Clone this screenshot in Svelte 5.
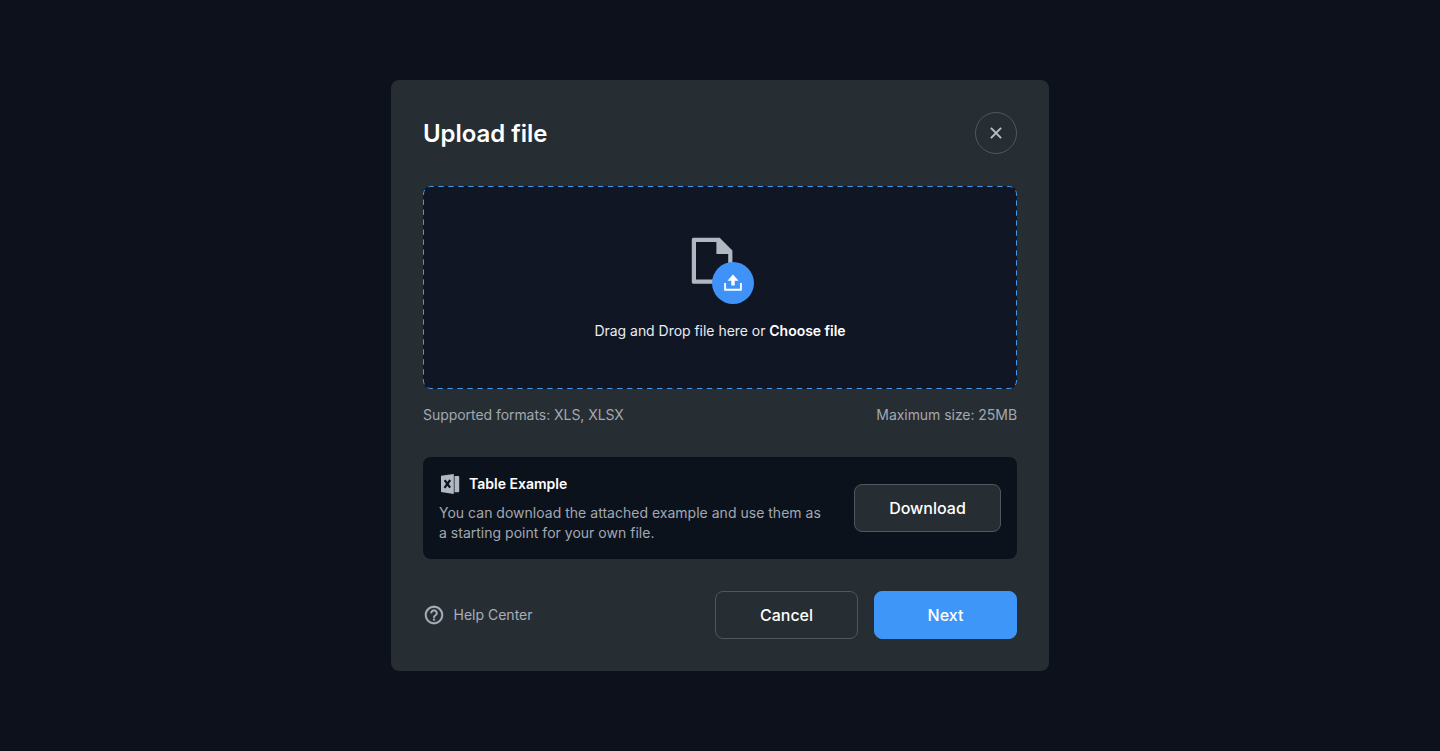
<script>
  const description =
    'You can download the attached example and use them as a starting point for your own file.';
</script>

<main>
  <section class="modal">
    <header>
      <h1>Upload file</h1>
      <button class="close" aria-label="Close">
        <svg width="14" height="14" viewBox="0 0 14 14"><path d="M1.9 1.9 12.1 12.1M12.1 1.9 1.9 12.1" stroke="currentColor" stroke-width="2" fill="none" /></svg>
      </button>
    </header>

    <div class="drop">
      <svg class="outline" width="594" height="203" viewBox="0 0 594 203" aria-hidden="true">
        <rect x=".5" y=".5" width="593" height="202" rx="7.5" fill="none" stroke="#4398ec" stroke-dasharray="5.4 4.58" stroke-dashoffset="2.7" />
      </svg>
      <svg class="file" width="64" height="68" viewBox="0 0 64 68" aria-hidden="true">
        <path fill="#b1b8c2" fill-rule="evenodd" d="M3.4 .8H29.7L42.4 13.5V45.2A1.6 1.6 0 0 1 40.8 46.8H3.4A1.6 1.6 0 0 1 1.8 45.2V2.4A1.6 1.6 0 0 1 3.4 .8ZM6 5V42.5H38.2V17H26.4V5Z" />
        <circle cx="43" cy="46" r="21" fill="#3f93f8" />
        <path d="M43 37.6 48.5 43.8H44.7V48.6H41.3V43.8H37.5Z" fill="#fff" />
        <path d="M35.1 46V52.7H50.9V46" fill="none" stroke="#fff" stroke-width="1.9" />
      </svg>
      <p>Drag and Drop file here or <b>Choose file</b></p>
    </div>

    <div class="limits">
      <span>Supported formats: XLS, XLSX</span>
      <span>Maximum size: 25MB</span>
    </div>

    <div class="example">
      <div class="copy">
        <div class="name">
          <svg width="22" height="22" viewBox="0 0 22 22" aria-hidden="true">
            <path fill="#b1b8c2" d="M2 2.8 14.8 1V21L2 19.1ZM15.5 3H19.4Q20.2 3 20.2 3.8V18.4Q20.2 19.2 19.4 19.2H15.5Z" />
            <path d="m5.7 7.2 5.4 7.5M11.2 7 5.5 14.8" fill="none" stroke="#0d131d" stroke-width="2.2" />
          </svg>
          <h2>Table Example</h2>
        </div>
        <p>{description}</p>
      </div>
      <button class="btn download">Download</button>
    </div>

    <footer>
      <div class="help">
        <svg width="22" height="22" viewBox="0 0 24 24" aria-hidden="true"><path fill="currentColor" stroke="currentColor" stroke-width=".25" d="M11 18h2v-2h-2v2zm1-16C6.480 2 2 6.480 2 12s4.480 10 10 10 10-4.480 10-10S17.520 2 12 2zm0 18c-4.410 0-8-3.590-8-8s3.590-8 8-8 8 3.590 8 8-3.590 8-8 8zm0-14c-2.210 0-4 1.790-4 4h2c0-1.100.9-2 2-2s2 .9 2 2c0 2-3 1.750-3 5h2c0-2.250 3-2.500 3-5 0-2.210-1.790-4-4-4z" /></svg>
        <span>Help Center</span>
      </div>
      <div class="actions">
        <button class="btn">Cancel</button>
        <button class="btn next">Next</button>
      </div>
    </footer>
  </section>
</main>

<style>
  :global(body) { margin: 0; background: #0c111b; }
  main {
    box-sizing: border-box;
    min-height: 751px;
    padding-top: 80px;
    display: flex;
    justify-content: center;
    align-items: flex-start;
    background: #0c111b;
    font-family: Inter, sans-serif;
    color: #fff;
  }
  .modal {
    box-sizing: border-box;
    width: 658px;
    height: 591px;
    padding: 32px;
    border-radius: 8px;
    background: #262d33;
  }
  h1, h2, p { margin: 0; }
  svg { display: block; flex: none; }
  button { font-family: inherit; padding: 0; box-sizing: border-box; }
  header { display: flex; justify-content: space-between; align-items: center; height: 42px; }
  h1 { padding-top: 2px; font-size: 24px; line-height: 32px; font-weight: 600; letter-spacing: -.04px; }
  .close {
    width: 42px;
    height: 42px;
    border-radius: 50%;
    border: 1px solid #50565d;
    background: transparent;
    color: #b9bec5;
    display: grid;
    place-items: center;
  }
  .drop {
    position: relative;
    box-sizing: border-box;
    height: 203px;
    margin-top: 32px;
    padding-top: 51px;
    border-radius: 8px;
    background: #101624;
    display: flex;
    flex-direction: column;
    align-items: center;
  }
  .outline { position: absolute; inset: 0; }
  .file { margin-left: 4px; }
  .drop p { margin-top: 16px; font-size: 14px; line-height: 20px; letter-spacing: -.03px; color: #e9ecf1; white-space: nowrap; }
  .drop b { font-weight: 600; color: #fff; }
  .limits {
    display: flex;
    justify-content: space-between;
    margin-top: 16px;
    font-size: 14px;
    line-height: 20px;
    letter-spacing: -.05px;
    color: #a2a8b0;
  }
  .example {
    box-sizing: border-box;
    height: 102px;
    margin-top: 32px;
    padding: 16px;
    border-radius: 8px;
    background: #0c121c;
    display: flex;
    justify-content: space-between;
    align-items: center;
  }
  .copy { width: 390px; }
  .name { display: flex; align-items: center; gap: 8px; height: 22px; }
  h2 { font-size: 14px; line-height: 20px; font-weight: 600; }
  .copy p { margin-top: 8px; font-size: 14px; line-height: 20px; letter-spacing: .015px; color: #a2a8b0; }
  .btn {
    width: 143px;
    height: 48px;
    border-radius: 8px;
    border: 1px solid #50565d;
    background: #262d33;
    color: #fff;
    font-size: 16px;
    line-height: 24px;
    font-weight: 500;
  }
  .btn.download { width: 147px; }
  .btn.next { border-color: #3f96f9; background: #3f96f9; }
  footer { display: flex; align-items: center; justify-content: space-between; margin-top: 32px; }
  .help { display: flex; align-items: center; gap: 8.5px; font-size: 14px; line-height: 20px; color: #a9afb8; }
  .actions { display: flex; gap: 16px; }
</style>
